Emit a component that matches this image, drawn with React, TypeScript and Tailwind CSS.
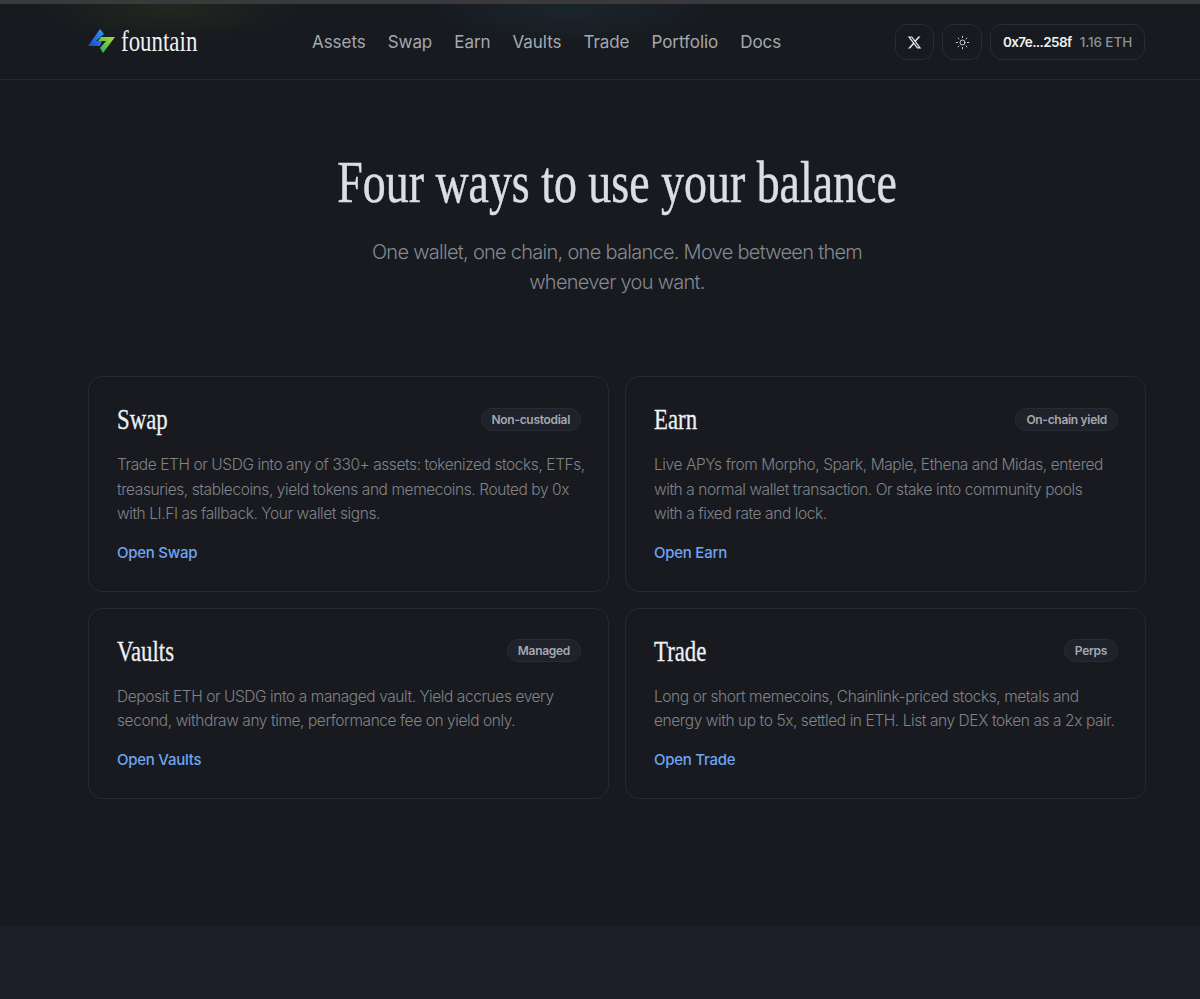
import { Sun } from "lucide-react";
import { FaXTwitter } from "react-icons/fa6";

const navLinks = ["Assets", "Swap", "Earn", "Vaults", "Trade", "Portfolio", "Docs"];

const cards = [
  {
    title: "Swap",
    badge: "Non-custodial",
    text: ["Trade ETH or USDG into any of 330+ assets: tokenized stocks, ETFs,", "treasuries, stablecoins, yield tokens and memecoins. Routed by 0x", "with LI.FI as fallback. Your wallet signs."],
    link: "Open Swap",
  },
  {
    title: "Earn",
    badge: "On-chain yield",
    text: ["Live APYs from Morpho, Spark, Maple, Ethena and Midas, entered", "with a normal wallet transaction. Or stake into community pools", "with a fixed rate and lock."],
    link: "Open Earn",
  },
  {
    title: "Vaults",
    badge: "Managed",
    text: ["Deposit ETH or USDG into a managed vault. Yield accrues every", "second, withdraw any time, performance fee on yield only."],
    link: "Open Vaults",
  },
  {
    title: "Trade",
    badge: "Perps",
    text: ["Long or short memecoins, Chainlink-priced stocks, metals and", "energy with up to 5x, settled in ETH. List any DEX token as a 2x pair."],
    link: "Open Trade",
  },
];

function Logo() {
  return (
    <svg width="27" height="24" viewBox="0 0 27 24">
      <defs>
        <linearGradient id="blueBolt" x1="0" y1="1" x2="1" y2="0">
          <stop offset="0" stopColor="#1b45d6" />
          <stop offset="1" stopColor="#2f9df4" />
        </linearGradient>
        <linearGradient id="greenBolt" x1="0" y1="1" x2="1" y2="0">
          <stop offset="0" stopColor="#1fae63" />
          <stop offset="1" stopColor="#b5d92f" />
        </linearGradient>
      </defs>
      <polygon points="12,0 16,5 8,12 14,12 12,17 0,17" fill="url(#blueBolt)" />
      <polygon points="13,8 27,8 15,24 12,19 18,12 10,12" fill="url(#greenBolt)" />
    </svg>
  );
}

function Card({ card }: { card: (typeof cards)[number] }) {
  return (
    <div className="rounded-[14px] border border-[#262a32] bg-[#181a1f] pt-6 pr-[27px] pb-[26px] pl-7">
      <div className="flex items-center justify-between">
        <h3 className="origin-left scale-x-[0.76] font-['Liberation_Serif',serif] text-[30px] leading-9 text-[#eef0f3] [-webkit-text-stroke:0.3px_#eef0f3]">
          {card.title}
        </h3>
        <span className="rounded-full border border-[#282c35] bg-[#1f222a] px-[10px] py-[3px] text-[12px] leading-[15px] font-semibold tracking-[-0.3px] text-[#a5a8ae]">
          {card.badge}
        </span>
      </div>
      <p className="mt-4 text-[15.5px] leading-[24.5px] font-light tracking-[-0.42px] whitespace-nowrap text-[#808389]">
        {card.text.map((line) => (
          <span key={line} className="block">
            {line}
          </span>
        ))}
      </p>
      <div className="mt-[14px] text-[15px] leading-6 font-medium tracking-[-0.25px] text-[#6ea5f3]">{card.link}</div>
    </div>
  );
}

export default function App() {
  return (
    <div className="flex min-h-screen flex-col overflow-hidden bg-[#171a1f] font-['Inter',sans-serif]">
      <div className="h-1 bg-[#3a3a3c]" />

      <header className="flex h-[76px] items-center border-b border-[#26292f] bg-[radial-gradient(ellipse_130px_34px_at_170px_4px,#23271e,transparent),radial-gradient(ellipse_150px_36px_at_570px_6px,#1a252c,transparent)] pt-px pr-[55px] pl-[88px]">
        <div className="flex w-[224px] items-center gap-[6px] pb-[2px]">
          <Logo />
          <span className="origin-left scale-x-[0.79] font-['Liberation_Serif',serif] text-[29px] leading-8 text-[#eef0f3]">
            fountain
          </span>
        </div>
        <nav className="flex gap-[22px] pt-[2px] text-[17px] tracking-[-0.05px] text-[#a5a8ae]">
          {navLinks.map((item) => (
            <a key={item}>{item}</a>
          ))}
        </nav>
        <div className="ml-auto flex items-center gap-2">
          <button className="flex h-9 w-[39px] items-center justify-center rounded-xl border border-[#282c34] text-[#e6e8ec]">
            <FaXTwitter size={15} />
          </button>
          <button className="flex h-9 w-10 items-center justify-center rounded-xl border border-[#282c34] text-[#d5d7dc]">
            <Sun size={15} strokeWidth={1.5} />
          </button>
          <button className="flex h-9 w-[155px] items-center justify-center gap-2 rounded-xl border border-[#282c34] text-[13.5px] font-semibold">
            <span className="tracking-[-0.6px] text-[#f0f1f3]">0x7e...258f</span>
            <span className="font-medium tracking-[-0.1px] text-[#8e9197]">1.16 ETH</span>
          </button>
        </div>
      </header>

      <main className="flex-1 pr-[54px] pl-[88px]">
        <div className="pt-[66px] text-center">
          <h1 className="scale-x-[0.765] font-['Liberation_Serif',serif] text-[60px] leading-[72px] text-[#dcdee3] [-webkit-text-stroke:0.5px_#dcdee3]">
            Four ways to use your balance
          </h1>
          <p className="mt-[19px] text-[20px] leading-[30px] font-light tracking-[-0.72px] text-[#85888e]">
            One wallet, one chain, one balance. Move between them
            <br />
            whenever you want.
          </p>
        </div>
        <div className="mt-[79px] grid grid-cols-2 gap-4">
          {cards.map((card) => (
            <Card key={card.title} card={card} />
          ))}
        </div>
      </main>

      <div className="h-[73px] border-t border-[#1c1f26] bg-[#1c1f27]" />
    </div>
  );
}
